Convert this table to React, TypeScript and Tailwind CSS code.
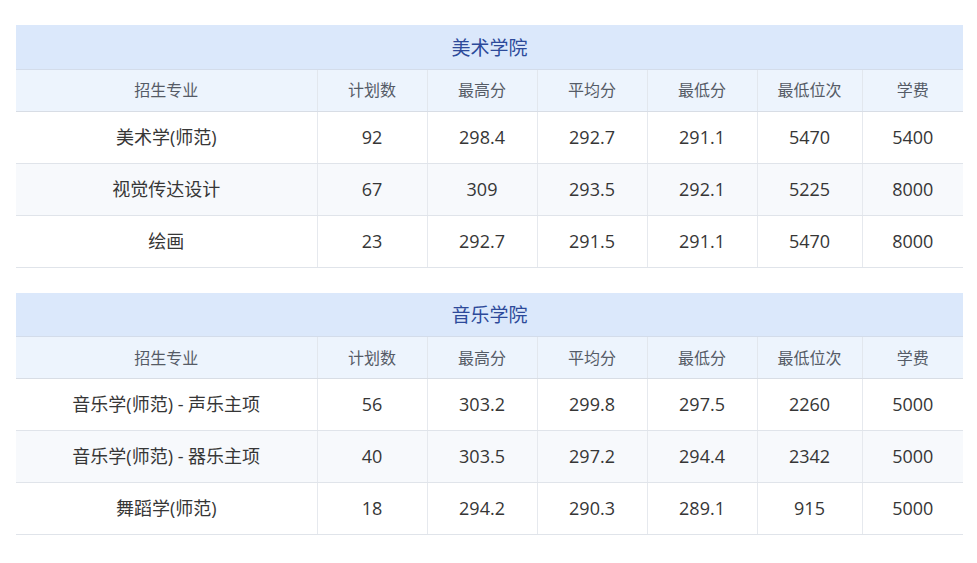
import React from 'react';

interface Section {
  title: string;
  rows: string[][];
}

const headers = ['招生专业', '计划数', '最高分', '平均分', '最低分', '最低位次', '学费'];
const widths = ['w-[301px]', 'w-[110px]', 'w-[110px]', 'w-[110px]', 'w-[110px]', 'w-[105px]', 'w-[101px]'];

const sections: Section[] = [
  {
    title: '美术学院',
    rows: [
      ['美术学(师范)', '92', '298.4', '292.7', '291.1', '5470', '5400'],
      ['视觉传达设计', '67', '309', '293.5', '292.1', '5225', '8000'],
      ['绘画', '23', '292.7', '291.5', '291.1', '5470', '8000'],
    ],
  },
  {
    title: '音乐学院',
    rows: [
      ['音乐学(师范) - 声乐主项', '56', '303.2', '299.8', '297.5', '2260', '5000'],
      ['音乐学(师范) - 器乐主项', '40', '303.5', '297.2', '294.4', '2342', '5000'],
      ['舞蹈学(师范)', '18', '294.2', '290.3', '289.1', '915', '5000'],
    ],
  },
];

function ScoreTable({ section }: { section: Section }) {
  return (
    <table className="w-[947px] border-collapse table-fixed">
      <colgroup>
        {widths.map((w, i) => (
          <col key={i} className={w} />
        ))}
      </colgroup>
      <thead>
        <tr>
          <th
            colSpan={7}
            className="h-[44px] p-0 pt-[2px] bg-[#dbe8fb] text-[19px] font-normal text-[#2d4a9a] border-b border-[#d3dcea]"
          >
            {section.title}
          </th>
        </tr>
        <tr className="bg-[#edf4fd]">
          {headers.map((h, i) => (
            <th
              key={h}
              className={`h-[42px] p-0 text-[16px] font-normal text-[#555b66] border-b border-[#d8dde5] ${
                i > 0 ? 'border-l border-l-[#e2e7ee]' : ''
              }`}
            >
              {h}
            </th>
          ))}
        </tr>
      </thead>
      <tbody>
        {section.rows.map((row, r) => (
          <tr key={r} className={r === 1 ? 'bg-[#f7f9fc]' : 'bg-white'}>
            {row.map((cell, i) => (
              <td
                key={i}
                className={`h-[52px] p-0 text-center whitespace-nowrap text-[18px] text-[#363636] border-b border-[#e0e4ea] ${
                  i > 0 ? 'border-l border-l-[#e6e9ee]' : ''
                }`}
              >
                {cell}
              </td>
            ))}
          </tr>
        ))}
      </tbody>
    </table>
  );
}

export default function App() {
  return (
    <div
      className="w-[977px] h-[563px] bg-white pt-[25px] pl-[16px] flex flex-col gap-[25px]"
      style={{ fontFamily: '"Open Sans", "Noto Sans CJK SC", sans-serif' }}
    >
      {sections.map((s) => (
        <ScoreTable key={s.title} section={s} />
      ))}
    </div>
  );
}
